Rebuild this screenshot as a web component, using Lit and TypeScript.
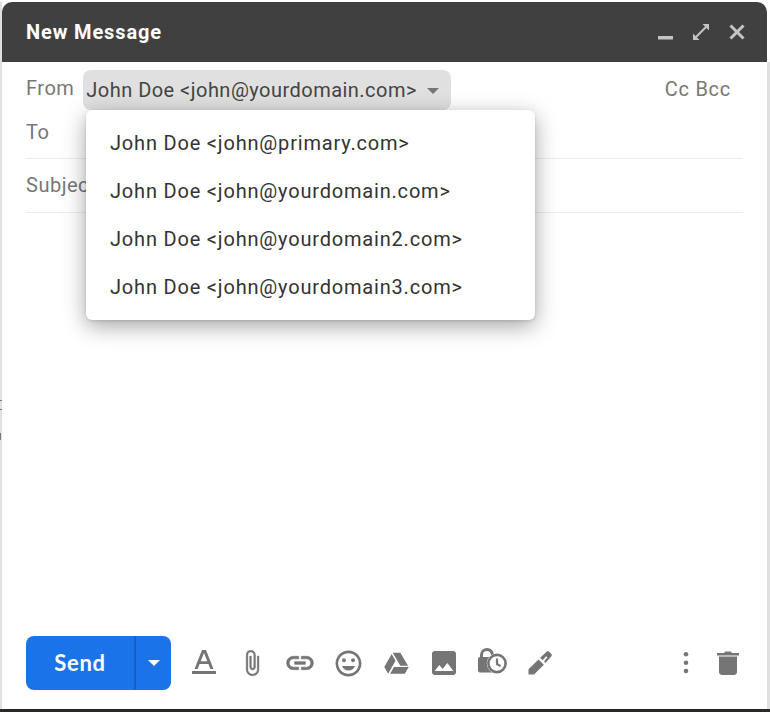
import { LitElement, html, css, svg } from "lit";
import { customElement } from "lit/decorators.js";

const ic = (d: any, w = 24, vb = "0 0 24 24") => html`<svg width=${w} height=${w} viewBox=${vb} fill="currentColor">${d}</svg>`;

@customElement("app-root")
class AppRoot extends LitElement {
  static styles = css`
    :host { display: block; width: 770px; height: 712px; box-sizing: border-box; background: #fff; padding: 2px 3px 3px 0; font-family: Roboto, "Liberation Sans", sans-serif; overflow: hidden; position: relative; }
    .bottom { position: absolute; left: 0; right: 0; bottom: 0; height: 3px; background: #2b2a26; }
    .tick { position: absolute; left: 0; width: 2px; background: #777; }
    .t1 { top: 400px; height: 1px; }
    .t2 { top: 409px; height: 1px; }
    .t3 { top: 433px; height: 7px; width: 1px; }
    .win { height: 100%; box-sizing: border-box; border-left: 2px solid #e0e0e0; display: flex; flex-direction: column; position: relative; }
    .win::after { content: ""; position: absolute; top: 60px; bottom: 0; right: -3px; width: 3px; background: #e0e0e0; }
    .head { height: 60px; flex: none; background: #404040; border-radius: 10px 10px 0 0; display: flex; align-items: center; justify-content: space-between; padding: 0 18px 0 24px; color: #fff; font-size: 20px; font-weight: 700; }
    .head .ctl { display: flex; gap: 12px; color: #c4c4c4; align-items: center; }
    .head svg { display: block; }
    .title { letter-spacing: .87px; }
    .row { margin: 0 24px; color: #777; font-size: 20px; display: flex; align-items: center; letter-spacing: .5px; }
    .from { height: 56px; align-items: flex-start; justify-content: space-between; margin-right: 36px; }
    .from .l { display: flex; gap: 9px; padding-top: 8px; }
    .from .lbl { line-height: 36px; height: 40px; }
    .chip { height: 40px; width: 368px; box-sizing: border-box; background: #e0e0e0; border-radius: 8px; color: #444; display: flex; align-items: center; padding-left: 3px; letter-spacing: .47px; }
    .chip .arrow { margin-left: 10px; border: 6px solid transparent; border-top: 6px solid #757575; border-bottom: 0; width: 0; height: 0; margin-top: 1px; }
    .cc { padding-top: 8px; line-height: 38px; letter-spacing: .72px; }
    .to { height: 40px; border-bottom: 1px solid #e8eef2; align-items: flex-start; line-height: 28px; }
    .subj { height: 53px; border-bottom: 1px solid #e8eef2; line-height: 53px; }
    .grow { flex: 1; }
    .menu { position: absolute; left: 84px; top: 108px; width: 449px; height: 210px; box-sizing: border-box; padding: 9px 0; background: #fff; border-radius: 6px; box-shadow: 0 6px 22px rgba(0,0,0,.36), 0 1px 3px rgba(0,0,0,.12); color: #333; font-size: 20px; }
    .menu div { height: 48px; line-height: 48px; padding-left: 24px; letter-spacing: .81px; }
    .foot { height: 54px; margin: 0 24px 19px; display: flex; align-items: center; color: #757575; }
    .send { width: 145px; height: 54px; background: #1a73e8; border-radius: 8px; color: #fff; display: flex; flex: none; font-size: 22px; font-family: Lato, Roboto, sans-serif; font-weight: 700; letter-spacing: .7px; }
    .send .t { width: 108px; border-right: 2px solid #1761c4; display: flex; align-items: center; justify-content: center; padding-bottom: 2px; box-sizing: content-box; }
    .send .d { flex: 1; display: flex; align-items: center; justify-content: center; }
    .send .d i { border: 6px solid transparent; border-top: 6px solid #fff; border-bottom: 0; }
    .icons { display: flex; align-items: center; margin-left: 9px; }
    .icons > span { width: 48px; height: 48px; display: flex; align-items: center; justify-content: center; }
    .end { margin-left: auto; display: flex; margin-right: -6px; }
    .end > span { width: 42px; height: 48px; display: flex; align-items: center; justify-content: center; }
  `;
  render() {
    return html`
      <div class="win">
        <div class="head">
          <span class="title">New Message</span>
          <span class="ctl">
            ${ic(svg`<rect x="5" y="16" width="15" height="3.5"/>`)}
            ${ic(svg`<path d="M13.5 4H20v6.5zM4 20v-6.5l6.5 6.5z"/><path d="M17 7 7 17" stroke="currentColor" stroke-width="2"/>`)}
            ${ic(svg`<path d="M5.5 5.5 18.5 18.5M18.5 5.5 5.5 18.5" stroke="currentColor" stroke-width="3" fill="none"/>`)}
          </span>
        </div>
        <div class="row from">
          <div class="l">
            <span class="lbl">From</span>
            <div class="chip">John Doe &lt;john@yourdomain.com&gt;<span class="arrow"></span></div>
          </div>
          <span class="cc">Cc Bcc</span>
        </div>
        <div class="row to">To</div>
        <div class="row subj">Subject</div>
        <div class="grow"></div>
        <div class="menu">
          <div>John Doe &lt;john@primary.com&gt;</div>
          <div>John Doe &lt;john@yourdomain.com&gt;</div>
          <div>John Doe &lt;john@yourdomain2.com&gt;</div>
          <div>John Doe &lt;john@yourdomain3.com&gt;</div>
        </div>
        <div class="foot">
          <div class="send"><span class="t">Send</span><span class="d"><i></i></span></div>
          <div class="icons">
            <span>${ic(svg`<g transform="translate(1 0)"><path d="M0 21h24v3H0z"/><path fill-rule="evenodd" d="M10 0h4l7.5 19h-3.2l-1.9-5H7.6l-1.9 5H2.5zM8.7 11.3h6.6L12 3z"/></g>`, 26, "0 0 26 26")}</span>
            <span>${ic(svg`<path stroke="currentColor" stroke-width=".3" d="M16.5 6v11.5c0 2.21-1.79 4-4 4s-4-1.79-4-4V5c0-1.38 1.12-2.5 2.5-2.5s2.5 1.12 2.5 2.5v10.5c0 .55-.45 1-1 1s-1-.45-1-1V6H10v9.5c0 1.38 1.12 2.5 2.5 2.5s2.5-1.12 2.5-2.5V5c0-2.21-1.79-4-4-4S7 2.79 7 5v12.5c0 3.04 2.46 5.5 5.5 5.5s5.5-2.46 5.5-5.5V6h-1.5z"/>`, 28)}</span>
            <span>${ic(svg`<path stroke="currentColor" stroke-width=".5" d="M3.9 12c0-1.71 1.39-3.1 3.1-3.1h4V7H7c-2.76 0-5 2.24-5 5s2.24 5 5 5h4v-1.9H7c-1.71 0-3.1-1.39-3.1-3.1zM8 13h8v-2H8v2zm9-6h-4v1.9h4c1.71 0 3.1 1.39 3.1 3.1s-1.39 3.1-3.1 3.1h-4V17h4c2.76 0 5-2.24 5-5s-2.24-5-5-5z"/>`, 32)}</span>
            <span>${ic(svg`<path d="M11.99 2C6.47 2 2 6.48 2 12s4.47 10 9.99 10C17.52 22 22 17.52 22 12S17.52 2 11.99 2zM12 20c-4.42 0-8-3.58-8-8s3.58-8 8-8 8 3.58 8 8-3.58 8-8 8z"/><circle cx="15.5" cy="9.5" r="1.5"/><circle cx="8.5" cy="9.5" r="1.5"/><path d="M12 17.5c2.33 0 4.31-1.46 5.11-3.5H6.89c.8 2.04 2.78 3.5 5.11 3.5z"/>`, 31)}</span>
            <span>${ic(svg`<path d="M7.71 3.5 1.15 15l3.43 6 6.55-11.5zM9.73 15 6.3 21h13.12l3.43-6zM22.28 14 15.42 2.5H8.57L15.43 14z"/>`, 27)}</span>
            <span>${ic(svg`<path d="M21 19V5c0-1.1-.9-2-2-2H5c-1.1 0-2 .9-2 2v14c0 1.1.9 2 2 2h14c1.1 0 2-.9 2-2zM8.5 13.5l2.5 3.01L14.5 12l4.5 6H5l3.5-4.5z"/>`, 32)}</span>
            <span>${ic(svg`<path d="M4.5 10V7a5.5 5.5 0 0 1 11 0v3" fill="none" stroke="currentColor" stroke-width="3"/><rect x="1" y="9" width="18" height="15.5" rx="2"/><circle cx="20" cy="15.5" r="10.2" fill="#fff"/><circle cx="20" cy="15.5" r="8.6" fill="#fff" stroke="currentColor" stroke-width="2.6"/><path d="M20 10.5v5.5l3.6 2.1" fill="none" stroke="currentColor" stroke-width="2.2"/>`, 30, "0 0 30 30")}</span>
            <span>${ic(svg`<path d="M.5 23.5v-5.2L10.5 8.4l5.4 5.4L6 23.5z"/><path d="M12.2 6.7 18.8.6c.7-.6 1.5-.6 2.1 0l2.5 2.5c.6.6.6 1.5 0 2.1l-5.9 6.8-1.5-1.5 3.3-4-1.2-1.2-3.5 3.9z"/>`, 24)}</span>
          </div>
          <div class="end">
            <span>${ic(svg`<circle cx="12" cy="3.2" r="2.3"/><circle cx="12" cy="11.7" r="2.3"/><circle cx="12" cy="20" r="2.3"/>`)}</span>
            <span>${ic(svg`<path d="M2 5.5h18V21c0 1.6-1.4 3-3 3H5c-1.6 0-3-1.4-3-3z"/><path d="M0 2h7l1-1.5h6l1 1.5h7v2.4H0z"/>`, 24, "-1 0 24 24")}</span>
          </div>
        </div>
      </div>
      <div class="bottom"></div>
      <i class="tick t1"></i><i class="tick t2"></i><i class="tick t3"></i>
    `;
  }
}
